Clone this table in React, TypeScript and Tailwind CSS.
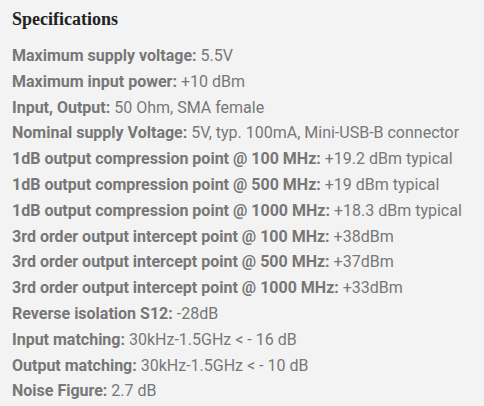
const specs = [
  ["Maximum supply voltage:", "5.5V"],
  ["Maximum input power:", "+10 dBm"],
  ["Input, Output:", "50 Ohm, SMA female"],
  ["Nominal supply Voltage:", "5V, typ. 100mA, Mini-USB-B connector"],
  ["1dB output compression point @ 100 MHz:", "+19.2 dBm typical"],
  ["1dB output compression point @ 500 MHz:", "+19 dBm typical"],
  ["1dB output compression point @ 1000 MHz:", "+18.3 dBm typical"],
  ["3rd order output intercept point @ 100 MHz:", "+38dBm"],
  ["3rd order output intercept point @ 500 MHz:", "+37dBm"],
  ["3rd order output intercept point @ 1000 MHz:", "+33dBm"],
  ["Reverse isolation S12:", "-28dB"],
  ["Input matching:", "30kHz-1.5GHz < - 16 dB"],
  ["Output matching:", "30kHz-1.5GHz < - 10 dB"],
  ["Noise Figure:", "2.7 dB"],
];

const App = () => {
  return (
    <div className="min-h-[406px] w-[484px] bg-[#f3f3f3] px-3 pt-[7px]">
      <h2 className="font-['Liberation_Serif',serif] text-[18px] font-bold leading-6 text-[#222]">
        Specifications
      </h2>
      <ul className="mt-3 font-['Roboto',sans-serif] text-[16px] leading-[25.8px] text-[#777]">
        {specs.map(([label, value]) => (
          <li key={label}>
            <strong className="font-bold">{label}</strong> {value}
          </li>
        ))}
      </ul>
    </div>
  );
};

export default App;
